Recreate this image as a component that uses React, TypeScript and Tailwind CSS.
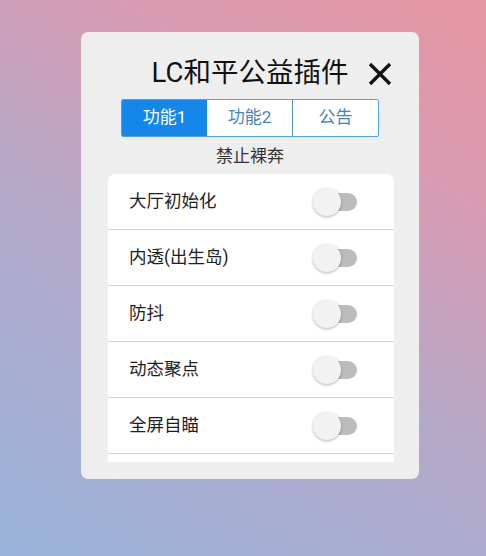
import React from "react";

const rows = ["大厅初始化", "内透(出生岛)", "防抖", "动态聚点", "全屏自瞄", ""];

function Toggle() {
  return (
    <div className="relative w-[46px] h-[30px]">
      <div className="absolute left-[8px] right-[2px] top-[6px] h-[18px] rounded-full bg-[#bcbcbc]" />
      <div className="absolute left-0 top-[1px] w-[28px] h-[28px] rounded-full bg-[#f2f2f2] shadow-[0_1px_3px_rgba(0,0,0,0.3)]" />
    </div>
  );
}

export default function App() {
  return (
    <div
      className="w-[486px] h-[556px] overflow-hidden bg-[linear-gradient(30deg,#98b3da_0%,#b4a8c8_45%,#d89bb2_75%,#e595a2_100%)] pt-[32px] pl-[81px]"
      style={{ fontFamily: 'Roboto, "Noto Sans CJK SC", "Noto Sans", sans-serif' }}
    >
      <div className="relative w-[338px] rounded-[7px] bg-[#eeeeee] pt-[21px] pb-[17px] flex flex-col items-center">
        <div className="h-[40px] flex items-center justify-center text-[27.5px] text-[#111] leading-none">
          LC和平公益插件
        </div>
        <svg
          className="absolute right-[27px] top-[30px]"
          width="24"
          height="24"
          viewBox="0 0 24 24"
        >
          <path d="M2 2 L22 22 M22 2 L2 22" stroke="#111" strokeWidth="3.3" strokeLinecap="butt" />
        </svg>
        <div className="mt-[6px] flex h-[38px] w-[258px] border border-[#4fa3e3] rounded-[2px] overflow-hidden text-[17px]">
          <div className="flex-1 flex items-center justify-center bg-[#1587ea] text-white">功能1</div>
          <div className="flex-1 flex items-center justify-center bg-white text-[#3f86b9] border-r border-[#4a8fc4]">功能2</div>
          <div className="flex-1 flex items-center justify-center bg-white text-[#3f86b9]">公告</div>
        </div>
        <div className="mt-[8px] h-[24px] flex items-center text-[17px] text-[#333]">禁止裸奔</div>
        <div className="mt-[5px] self-start ml-[27px] w-[286px] h-[288px] overflow-hidden rounded-t-[7px] bg-white">
          {rows.map((r, i) => (
            <div
              key={i}
              className="h-[56px] border-b border-[#d4d4d4] flex items-center justify-between pl-[21px] pr-[35px]"
            >
              <span className="text-[17.5px] text-[#1e1e1e]">{r}</span>
              {r ? <Toggle /> : null}
            </div>
          ))}
        </div>
      </div>
    </div>
  );
}
